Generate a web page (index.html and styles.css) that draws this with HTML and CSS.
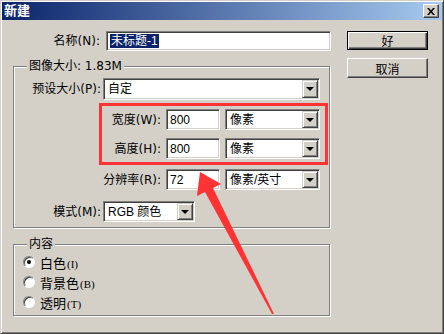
FILE: index.html
```html
<!DOCTYPE html>
<html lang="zh-CN">
<head>
    <meta charset="utf-8" />
    <title>新建</title>
    <link rel="stylesheet" href="styles.css">
</head>
<body>
<div class="window">
    <div class="titlebar">
        <span class="title">新建</span>
        <span class="close">
            <svg width="8" height="7" viewBox="0 0 8 7">
                <path d="M0,0 L2,0 L4,2.5 L6,0 L8,0 L5,3.5 L8,7 L6,7 L4,4.5 L2,7 L0,7 L3,3.5 Z" fill="#000"/>
            </svg>
        </span>
    </div>
    <div class="content">
        <div class="left">
            <div class="row name-row">
                <span class="lbl lbl-name">名称(N):</span>
                <span class="field name-field"><span class="selected">未标题-1</span></span>
            </div>

            <div class="group size-group">
                <span class="group-title">图像大小: 1.83M</span>
                <div class="row preset-row">
                    <span class="lbl lbl-wide">预设大小(P):</span>
                    <span class="combo combo-preset"><span class="combo-text">自定</span><span class="drop"></span></span>
                </div>
                <div class="dim-box">
                    <div class="row dim-row">
                        <span class="lbl lbl-dim">宽度(W):</span>
                        <span class="field num-field">800</span>
                        <span class="combo combo-unit"><span class="combo-text">像素</span><span class="drop"></span></span>
                    </div>
                    <div class="row dim-row">
                        <span class="lbl lbl-dim">高度(H):</span>
                        <span class="field num-field">800</span>
                        <span class="combo combo-unit"><span class="combo-text">像素</span><span class="drop"></span></span>
                    </div>
                </div>
                <div class="row res-row">
                    <span class="lbl lbl-res">分辨率(R):</span>
                    <span class="field num-field">72</span>
                    <span class="combo combo-unit"><span class="combo-text">像素/英寸</span><span class="drop"></span></span>
                </div>
                <div class="row mode-row">
                    <span class="lbl lbl-wide">模式(M):</span>
                    <span class="combo combo-mode"><span class="combo-text">RGB 颜色</span><span class="drop"></span></span>
                </div>
            </div>

            <div class="group fill-group">
                <span class="group-title">内容</span>
                <div class="radio-row"><span class="radio checked"></span><span>白色<small>(I)</small></span></div>
                <div class="radio-row"><span class="radio"></span><span>背景色<small>(B)</small></span></div>
                <div class="radio-row"><span class="radio"></span><span>透明<small>(T)</small></span></div>
            </div>
        </div>

        <div class="buttons">
            <span class="btn btn-default">好</span>
            <span class="btn">取消</span>
        </div>
    </div>

    <!-- red annotation arrow drawn over the dialog -->
    <svg class="arrow" width="444" height="334" viewBox="0 0 444 334">
        <polygon points="199,171 220,183 212,187 273,313 271,313 204,191 196,195" fill="#f33"/>
    </svg>
</div>
</body>
</html>
```

FILE: styles.css
```css
html, body {
    margin: 0;
    padding: 0;
    background: #d4d0c8;
}
body {
    font-family: "Liberation Sans", "Noto Sans CJK SC", sans-serif;
    font-size: 12px;
    color: #000;
}
.window {
    position: relative;
    box-sizing: border-box;
    width: 444px;
    height: 334px;
    padding: 1px;
    background: #d4d0c8;
    border: 1px solid;
    border-color: #d4d0c8 #404040 #404040 #d4d0c8;
    box-shadow: inset 1px 1px 0 #fff, inset -1px -1px 0 #808080;
}
.titlebar {
    height: 18px;
    display: flex;
    align-items: center;
    justify-content: space-between;
    padding: 0 3px 0 2px;
    background: linear-gradient(to right, #0a246a, #a6caf0);
}
.title {
    color: #fff;
    font-weight: bold;
    font-size: 13px;
    line-height: 18px;
}
.close {
    box-sizing: border-box;
    width: 16px;
    height: 14px;
    display: flex;
    align-items: center;
    justify-content: center;
    background: #d4d0c8;
    border: 1px solid;
    border-color: #fff #404040 #404040 #fff;
    box-shadow: inset -1px -1px 0 #808080;
}

.content {
    display: flex;
    padding: 11px 0 0 11px;
}
.left { width: 318px; }
.buttons {
    width: 81px;
    margin-left: 16px;
    display: flex;
    flex-direction: column;
    gap: 8px;
}

.row {
    display: flex;
    align-items: center;
}
.lbl, .group-title {
    font-family: "DejaVu Sans", "Noto Sans CJK SC", sans-serif;
}
.lbl {
    text-align: right;
    white-space: nowrap;
    line-height: 14px;
}
.lbl-name { width: 87px; margin-right: 6px; }
.lbl-wide { width: 87px; margin-right: 2px; }
.lbl-dim  { width: 59px; margin-right: 5px; }
.lbl-res  { width: 147px; margin-right: 5px; }

/* sunken edit / combo boxes */
.field, .combo {
    box-sizing: border-box;
    display: flex;
    align-items: center;
    background: #fff;
    border: 1px solid;
    border-color: #808080 #fff #fff #808080;
    padding: 1px;
    box-shadow: inset 1px 1px 0 #404040, inset -1px -1px 0 #d4d0c8;
    white-space: nowrap;
}
.field { padding-left: 3px; }
.name-row { height: 20px; }
.name-field { width: 225px; height: 20px; }
.selected {
    background: #0a246a;
    color: #fff;
    line-height: 14px;
    padding: 0 1px;
}
.num-field { width: 54px; height: 21px; margin-right: 5px; }

.combo-text {
    flex: 1;
    padding-left: 3px;
    line-height: 14px;
}
.combo-preset { width: 217px; height: 22px; }
.combo-unit   { width: 95px; height: 21px; }
.combo-mode   { width: 92px; height: 21px; }
.drop {
    box-sizing: border-box;
    width: 16px;
    align-self: stretch;
    display: flex;
    align-items: center;
    justify-content: center;
    background: #d4d0c8;
    border: 1px solid;
    border-color: #d4d0c8 #404040 #404040 #d4d0c8;
    box-shadow: inset 1px 1px 0 #fff, inset -1px -1px 0 #808080;
}
.drop::after {
    content: "";
    border-left: 4px solid transparent;
    border-right: 4px solid transparent;
    border-top: 4px solid #000;
}

/* etched group boxes */
.group {
    position: relative;
    box-sizing: border-box;
    width: 317px;
    border: 1px solid #808080;
    box-shadow: inset 1px 1px 0 #fff, 1px 1px 0 #fff;
}
.group-title {
    position: absolute;
    top: -8px;
    left: 13px;
    padding: 0 2px;
    line-height: 14px;
    background: #d4d0c8;
}
.size-group {
    margin-top: 15px;
    padding: 11px 0 5px 0;
}
.preset-row { height: 22px; }
.dim-box {
    box-sizing: border-box;
    width: 229px;
    margin: 3px 0 0 85px;
    padding: 3px 0;
    border: 3px solid #f33;
    display: flex;
    flex-direction: column;
    gap: 8px;
}
.dim-row { height: 21px; }
.res-row { height: 21px; margin-top: 4px; }
.mode-row { height: 21px; margin-top: 11px; }

.fill-group {
    margin-top: 16px;
    padding: 7px 0 3px 0;
}
.radio-row {
    height: 20px;
    display: flex;
    align-items: center;
    padding-left: 9px;
    gap: 5px;
    font-size: 13px;
}
.radio-row small {
    font-family: "Liberation Serif", serif;
    font-size: 11px;
    margin-left: 1px;
}
.radio {
    box-sizing: border-box;
    width: 12px;
    height: 12px;
    border-radius: 50%;
    background: #fff;
    border: 1px solid;
    border-color: #808080 #fff #fff #808080;
    box-shadow: inset 1px 1px 0 #404040;
    display: flex;
    align-items: center;
    justify-content: center;
}
.radio.checked::after {
    content: "";
    width: 4px;
    height: 4px;
    border-radius: 50%;
    background: #000;
}

/* push buttons */
.btn {
    box-sizing: border-box;
    height: 20px;
    display: flex;
    align-items: center;
    justify-content: center;
    background: #d4d0c8;
    border: 1px solid;
    border-color: #fff #404040 #404040 #fff;
    box-shadow: inset -1px -1px 0 #808080;
}
.btn-default {
    height: 19px;
    border-color: #000;
    box-shadow: inset 1px 1px 0 #fff, inset -1px -1px 0 #404040, inset -2px -2px 0 #808080;
}

.arrow {
    position: absolute;
    left: 0;
    top: 0;
    pointer-events: none;
}
```
